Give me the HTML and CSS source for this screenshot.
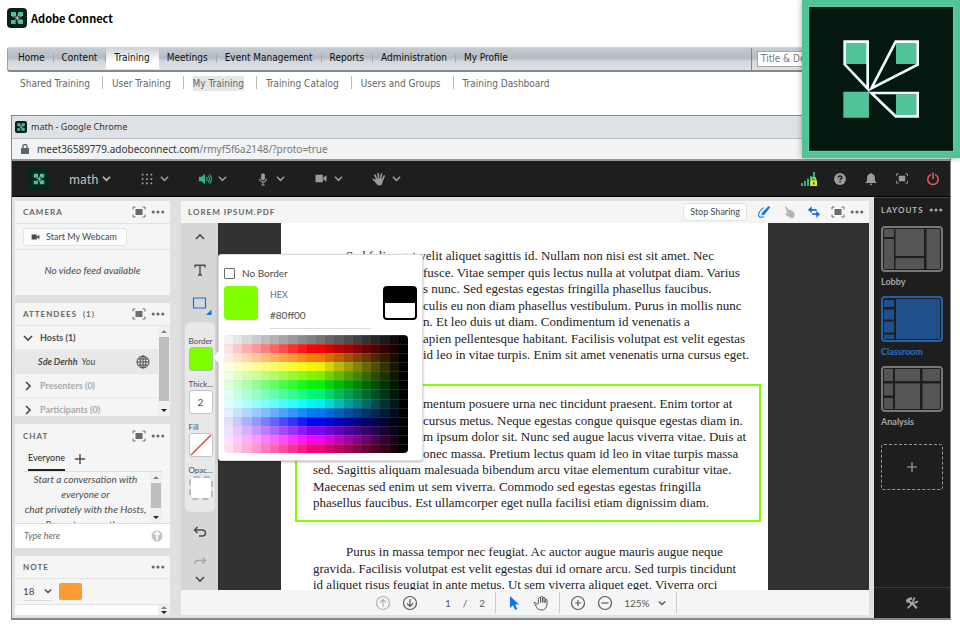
FILE: index.html
```html
<!DOCTYPE html>
<html lang="en">
<head>
<meta charset="utf-8">
<title>Adobe Connect</title>
<link rel="stylesheet" href="styles.css">
</head>
<body>
<svg class="defs" aria-hidden="true">
  <symbol id="mark" viewBox="0 0 24 24">
    <path fill="#3fc493" d="M3 3h7v6H3zM14 3h7v6h-7zM3 15h7v6H3zM14 15h7v6h-7z"/>
    <path fill="none" stroke="#bdebd9" stroke-width="1" d="M9.500 4v4l2.500 4 3-8M4 8.500l8 4 8-4M12 12.500l8 3M12 12.500l2.500 7.500M12 12.500l-3 3"/>
  </symbol>
  <symbol id="down" viewBox="0 0 10 10"><path fill="none" stroke="currentColor" stroke-width="1.7" d="M1 3l4 4 4-4"/></symbol>
  <symbol id="right" viewBox="0 0 10 10"><path fill="none" stroke="currentColor" stroke-width="1.7" d="M3 1l4 4-4 4"/></symbol>
  <symbol id="up" viewBox="0 0 10 10"><path fill="none" stroke="currentColor" stroke-width="1.7" d="M1 7l4-4 4 4"/></symbol>
  <symbol id="dots" viewBox="0 0 14 4"><circle cx="2.2" cy="2" r="1.6"/><circle cx="7" cy="2" r="1.6"/><circle cx="11.8" cy="2" r="1.6"/></symbol>
  <symbol id="full" viewBox="0 0 14 12"><path d="M3.500 3h7v6h-7z"/><path fill="none" stroke="currentColor" stroke-width="1" d="M1 3.500V1h2.500M10.500 1H13v2.500M13 8.500V11h-2.500M3.500 11H1V8.500"/></symbol>
  <symbol id="camera" viewBox="0 0 14 12"><path d="M1 2h8v8H1zM9.500 5L13 2.500v7L9.500 7z"/></symbol>
  <symbol id="hand" viewBox="0 0 16 16"><path fill="none" stroke="currentColor" stroke-width="1.800" stroke-linecap="round" d="M5.500 9L3.500 3.500M7.500 8L7 1.700M9.800 8l1-5.800M12 9l2-4.500M4.500 11L1.500 8.500"/><path d="M4 8h8.800l-1 4.500L10.500 15H6.500L3.500 11z"/></symbol>
</svg>

<header class="brand">
  <span class="badge"><svg><use href="#mark"/></svg></span>
  <strong>Adobe Connect</strong>
</header>

<div class="mainbar">
  <nav class="tabs">
    <a href="#">Home</a><a href="#">Content</a><a href="#" class="on">Training</a><a href="#">Meetings</a><a href="#">Event Management</a><a href="#">Reports</a><a href="#">Administration</a><a href="#">My Profile</a>
  </nav>
  <div class="search"><input type="text" aria-label="Search" value="Title &amp; Description"></div>
</div>
<nav class="subnav">
  <a href="#">Shared Training</a><a href="#">User Training</a><a href="#" class="on"><span>My Training</span></a><a href="#">Training Catalog</a><a href="#">Users and Groups</a><a href="#">Training Dashboard</a>
</nav>

<div class="window">
  <div class="titlebar"><span class="badge small"><svg><use href="#mark"/></svg></span>math - Google Chrome</div>
  <div class="address">
    <svg class="lock" viewBox="0 0 8 10"><path d="M0 4h8v6H0z"/><path fill="none" stroke="#5f6368" stroke-width="1.300" d="M2 4V2.500a2 2 0 0 1 4 0V4"/></svg>
    <span>meet36589779.adobeconnect.com<i>/rmyf5f6a2148/?proto=true</i></span>
  </div>

  <div class="menubar">
    <span class="badge dark"><svg><use href="#mark"/></svg></span>
    <button class="math">math <svg class="chev"><use href="#down"/></svg></button>
    <button aria-label="Pods"><svg viewBox="0 0 16 16"><path d="M2 2h2v2H2zM7 2h2v2H7zM12 2h2v2h-2zM2 7h2v2H2zM7 7h2v2H7zM12 7h2v2h-2zM2 12h2v2H2zM7 12h2v2H7zM12 12h2v2h-2z"/></svg><svg class="chev"><use href="#down"/></svg></button>
    <button aria-label="Speaker"><svg class="mint" viewBox="0 0 16 16"><path d="M1 5.500h3L8 2v12l-4-3.500H1z"/><path fill="none" stroke="currentColor" stroke-width="1.200" d="M9.500 5.500q2 2.500 0 5M11.500 4q3 4 0 8M13.300 2.500q4 5.500 0 11"/></svg><svg class="chev"><use href="#down"/></svg></button>
    <button aria-label="Microphone"><svg viewBox="0 0 16 16"><rect x="5.800" y="1.500" width="4.400" height="8" rx="2.200"/><path fill="none" stroke="currentColor" stroke-width="1.200" d="M4.200 7.500q0 4 3.800 4t3.800-4M8 11.500V15M6 14.800h4"/></svg><svg class="chev"><use href="#down"/></svg></button>
    <button aria-label="Camera"><svg class="cam"><use href="#camera"/></svg><svg class="chev"><use href="#down"/></svg></button>
    <button aria-label="Raise hand"><svg><use href="#hand"/></svg><svg class="chev"><use href="#down"/></svg></button>
    <div class="status">
      <button aria-label="Connection"><svg class="signal" viewBox="0 0 16 16"><path fill="#2fb47e" d="M0 12h2v3H0zM3 10h2v5H3zM6 7.500h2V15H6zM9 5h2v10H9zM12 1h2v14h-2z"/><path fill="#f4ec10" d="M9.500 9.500H16V15H9.500z"/><path fill="none" stroke="#f4ec10" stroke-width="1.200" d="M10.800 9.500V8q0-1.500 2-1.500t2 1.500v1.500"/><path fill="#222" d="M12.200 11h1.200v2.500h-1.200z"/></svg></button>
      <button aria-label="Help"><svg viewBox="0 0 16 16"><circle cx="8" cy="8" r="6.800"/><path fill="none" stroke="#1e1e1e" stroke-width="1.700" d="M5.900 6.400q.1-1.900 2.100-1.900t2.100 1.700q0 1-1.100 1.600-.9.500-.9 1.400M8.100 10.300v1.500"/></svg></button>
      <button aria-label="Notifications"><svg viewBox="0 0 16 16"><path d="M8 1q1 0 1 1Q12.500 3 12.500 7v3l2 2.500h-13l2-2.500V7q0-4 3.500-5 0-1 1-1zM6.500 13.300h3q-.3 1.700-1.500 1.700t-1.500-1.700z"/></svg></button>
      <button aria-label="Full screen"><svg class="cam"><use href="#full"/></svg></button>
      <button aria-label="End"><svg class="red" viewBox="0 0 16 16"><path fill="none" stroke="currentColor" stroke-width="1.700" stroke-linecap="round" d="M8 1.200v6.300M5 3.200a6 6 0 1 0 6 0"/></svg></button>
    </div>
  </div>

  <div class="room">
    <div class="pods">
      <section class="pod camera">
        <header><h2>CAMERA</h2><button aria-label="Full screen"><svg class="full"><use href="#full"/></svg></button><button aria-label="More"><svg class="dots"><use href="#dots"/></svg></button></header>
        <div class="row"><button class="soft"><svg><use href="#camera"/></svg>Start My Webcam</button></div>
        <p><em>No video feed available</em></p>
      </section>

      <section class="pod attendees">
        <header><h2>ATTENDEES &nbsp;(1)</h2><button aria-label="Full screen"><svg class="full"><use href="#full"/></svg></button><button aria-label="More"><svg class="dots"><use href="#dots"/></svg></button></header>
        <div class="scroll">
          <ul>
            <li><svg><use href="#down"/></svg><b>Hosts (1)</b></li>
            <li class="person"><em><b>Sde Derhh</b>&nbsp; You</em><svg class="globe" viewBox="0 0 14 14"><g fill="none" stroke="currentColor" stroke-width="1"><circle cx="7" cy="7" r="6"/><ellipse cx="7" cy="7" rx="2.900" ry="6"/><path d="M7 1v12M1 7h12M1.900 4h10.200M1.900 10h10.200"/></g></svg></li>
            <li class="dim"><svg><use href="#right"/></svg><b>Presenters (0)</b></li>
            <li class="dim"><svg><use href="#right"/></svg><b>Participants (0)</b></li>
          </ul>
          <div class="bar"><i class="tri"></i><i class="thumb"></i><i class="tri dn"></i></div>
        </div>
      </section>

      <section class="pod chat">
        <header><h2>CHAT</h2><button aria-label="Full screen"><svg class="full"><use href="#full"/></svg></button><button aria-label="More"><svg class="dots"><use href="#dots"/></svg></button></header>
        <div class="who"><button class="on">Everyone</button><button aria-label="Add chat"><svg viewBox="0 0 10 10"><path fill="none" stroke="currentColor" stroke-width="1.400" d="M5 0v10M0 5h10"/></svg></button></div>
        <div class="scroll">
          <p><em>Start a conversation with<br>everyone or<br>chat privately with the Hosts,<br>Presenters, or other</em></p>
          <div class="bar"><i class="tri"></i><i class="thumb"></i><i class="tri dn"></i></div>
        </div>
        <div class="type"><input type="text" aria-label="Message" placeholder="Type here"><button aria-label="Send"><svg viewBox="0 0 12 12"><circle cx="6" cy="6" r="5.500"/><path fill="none" stroke="#fff" stroke-width="1.600" d="M6 10V4M3.300 4.500L6 2.500l2.700 2"/></svg></button></div>
      </section>

      <section class="pod note">
        <header><h2>NOTE</h2><button aria-label="More"><svg class="dots"><use href="#dots"/></svg></button></header>
        <div class="row"><label class="pick"><select aria-label="Font size"><option>18</option></select><svg class="chev"><use href="#down"/></svg></label><button class="orange" aria-label="Text colour"></button></div>
        <div class="scroll"><div class="pad"></div><div class="bar"><i class="tri"></i><i class="tri dn"></i></div></div>
      </section>
    </div>

    <section class="share">
      <header>
        <h2>LOREM IPSUM.PDF</h2>
        <button class="soft">Stop Sharing</button>
        <button class="blue" aria-label="Draw"><svg viewBox="0 0 16 16"><path d="M5 12l1-3.500L13 1.500q1-.5 1.500.3t0 1.500L8.300 11z"/><path fill="none" stroke="currentColor" stroke-width="1.200" d="M7.500 3Q1 8 2 12.500q1 2.500 6 1"/></svg></button>
        <button class="pale" aria-label="Pointer"><svg viewBox="0 0 16 16"><path d="M3.500 2q1-1 2 .2L8 6.500l.3-1q1-.8 1.600.2l.4 1q1-.8 1.700.4l.2.7q1.300-.5 1.800 1 1 3.200-.2 5.200-2 1.800-4.500.7L3.500 10.500q-.3-1.300 1.500-1L6.500 10z"/></svg></button>
        <button class="blue" aria-label="Sync"><svg viewBox="0 0 16 16"><path d="M1 5.500L5.500 1.500v3H11v2H5.500v3zM15 10.500l-4.500-4v3H6v2h4.500v3z"/></svg></button>
        <button aria-label="Full screen"><svg class="full"><use href="#full"/></svg></button>
        <button aria-label="More"><svg class="dots"><use href="#dots"/></svg></button>
      </header>

      <div class="stage">
        <div class="tools">
          <button class="tall" aria-label="Scroll up"><svg class="s10"><use href="#up"/></svg></button>
          <button class="tall" aria-label="Text"><svg class="s12" viewBox="0 0 12 12"><path fill="none" stroke="currentColor" stroke-width="1.400" d="M1 3.500V1.200h10v2.300M6 1v10M4 11h4"/></svg></button>
          <button class="tall blue" aria-label="Shape"><svg class="shape" viewBox="0 0 20 18"><path fill="none" stroke="currentColor" stroke-width="1.200" d="M1.500 1h12v10h-12z"/><path d="M19.500 12.500V18H14z"/></svg></button>
          <div class="props">
            <span>Border</span><button class="box green" aria-label="Border colour"></button>
            <span>Thick...</span><input class="box" aria-label="Thickness" value="2">
            <span>Fill</span><button class="box" aria-label="Fill"><svg viewBox="0 0 22 22"><path stroke="#e23a3a" stroke-width="1.300" d="M1 21L21 1"/></svg></button>
            <span>Opac...</span><button class="box opac" aria-label="Opacity"></button>
          </div>
          <button class="undo" aria-label="Undo"><svg viewBox="0 0 14 12"><path fill="none" stroke="currentColor" stroke-width="1.500" d="M4.500 1L1.500 4l3 3M2 4h7q3.500 0 3.500 3T9 10H6"/></svg></button>
          <button class="redo" aria-label="Redo"><svg viewBox="0 0 14 12"><path fill="none" stroke="currentColor" stroke-width="1.300" d="M9.500 1.500l3 3-3 3M12 4.500H5q-3.500 0-3.500 4"/></svg></button>
          <button class="last" aria-label="Scroll down"><svg class="s10"><use href="#down"/></svg></button>
        </div>

        <article class="paper">
          <p><span class="in">Sed felis eget velit aliquet sagittis id. Nullam non nisi est sit amet. Nec</span><span><i>elementum nisi quis</i>fusce. Vitae semper quis lectus nulla at volutpat diam. Varius</span><span><i>vel pharetra turpi</i>s nunc. Sed egestas egestas fringilla phasellus faucibus.</span><span><i>Risus viverra ia</i>culis eu non diam phasellus vestibulum. Purus in mollis nunc</span><span><i>sed id semper risus i</i>n. Et leo duis ut diam. Condimentum id venenatis a</span><span><i>condimentum s</i>apien pellentesque habitant. Facilisis volutpat est velit egestas</span><span><i>dui id ornare arcu</i>id leo in vitae turpis. Enim sit amet venenatis urna cursus eget.</span></p>
          <p class="marked"><span class="in"><i>Condi</i>mentum posuere urna nec tincidunt praesent. Enim tortor at</span><span><i>auctor urna nunc</i>cursus metus. Neque egestas congue quisque egestas diam in.</span><span><i>Arcu cursus Lore</i>m ipsum dolor sit. Nunc sed augue lacus viverra vitae. Duis at</span><span><i>tellus at urna D</i>onec massa. Pretium lectus quam id leo in vitae turpis massa</span><span>sed. Sagittis aliquam malesuada bibendum arcu vitae elementum curabitur vitae.</span><span>Maecenas sed enim ut sem viverra. Commodo sed egestas egestas fringilla</span><span>phasellus faucibus. Est ullamcorper eget nulla facilisi etiam dignissim diam.</span></p>
          <p class="short"><span class="in">Purus in massa tempor nec feugiat. Ac auctor augue mauris augue neque</span><span>gravida. Facilisis volutpat est velit egestas dui id ornare arcu. Sed turpis tincidunt</span><span>id aliquet risus feugiat in ante metus. Ut sem viverra aliquet eget. Viverra orci</span></p>
        </article>

        <div class="popover">
          <label class="none"><input type="checkbox">No Border</label>
          <div class="hex">
            <i class="current"></i>
            <label><span>HEX</span><input type="text" value="#80ff00"></label>
            <i class="duo"></i>
          </div>
          <div class="palette" id="palette"></div>
        </div>
      </div>

      <footer>
        <button class="pale" aria-label="Previous page"><svg viewBox="0 0 16 16"><g fill="none" stroke="currentColor" stroke-width="1.200"><circle cx="8" cy="8" r="6.500"/><path d="M8 12V4.500M5 7.500l3-3 3 3"/></g></svg></button>
        <button aria-label="Next page"><svg viewBox="0 0 16 16"><g fill="none" stroke="currentColor" stroke-width="1.200"><circle cx="8" cy="8" r="6.500"/><path d="M8 4v7.500M5 8.500l3 3 3-3"/></g></svg></button>
        <span class="pages"><span>1</span><span>/</span><span>2</span></span>
        <i class="sep"></i>
        <button class="blue" aria-label="Select"><svg viewBox="0 0 16 16"><path d="M4 1l9 8.500H9.200l2 4.500-2 1-2.200-4.700L4 13z"/></svg></button>
        <button aria-label="Pan"><svg viewBox="0 0 16 16"><path fill="none" stroke="currentColor" stroke-width="1" d="M4.500 10L2.500 7.500q-1-.8-1.300.3L4 13q1 2 4.500 2 5 0 5.500-6V5q-1-1.500-2 0v3V3q-1-1.500-2.200 0v4.500V2q-1-1.300-2.200 0v5.500V3Q6.500 2 5.300 3.500V9"/></svg></button>
        <i class="sep"></i>
        <button aria-label="Zoom in"><svg viewBox="0 0 16 16"><g fill="none" stroke="currentColor" stroke-width="1.200"><circle cx="8" cy="8" r="6.500"/><path d="M8 5v6M5 8h6"/></g></svg></button>
        <button aria-label="Zoom out"><svg viewBox="0 0 16 16"><g fill="none" stroke="currentColor" stroke-width="1.200"><circle cx="8" cy="8" r="6.500"/><path d="M4.500 8h7"/></g></svg></button>
        <label class="pick zoom"><select aria-label="Zoom level"><option>125%</option></select><svg class="chev"><use href="#down"/></svg></label>
        <i class="sep"></i>
      </footer>
    </section>

    <aside class="layouts">
      <header><h2>LAYOUTS</h2><button aria-label="More"><svg class="dots"><use href="#dots"/></svg></button></header>
      <button class="card"><svg viewBox="0 0 62 46"><rect class="frame" x="1" y="1" width="60" height="44" rx="3"/><path d="M3 3h10v8H3zM3 13h10v30H3zM14.500 3H43v27H14.500zM14.500 32H43v11H14.500zM45.500 3H59v40H45.500z"/></svg>Lobby</button>
      <button class="card active"><svg viewBox="0 0 62 46"><rect class="frame" x="1" y="1" width="60" height="44" rx="3"/><path d="M3 4h10v7H3zM3 13.500h10v10H3zM3 25.500h10v11H3zM3 38.500h10V43H3zM15 3h44v40H15z"/></svg>Classroom</button>
      <button class="card"><svg viewBox="0 0 62 46"><rect class="frame" x="1" y="1" width="60" height="44" rx="3"/><path d="M3 3h9v12H3zM3 17.500h9v12H3zM3 32h9v11H3zM14 3h25v12H14zM14 17.500h25V43H14zM41.500 3H59v12H41.500zM41.500 17.500H59V43H41.500z"/></svg>Analysis</button>
      <button class="add" aria-label="Add layout"><svg viewBox="0 0 10 10"><path fill="none" stroke="currentColor" stroke-width="1.200" d="M5 0v10M0 5h10"/></svg></button>
      <button class="wrench" aria-label="Host tools"><svg viewBox="0 0 16 16"><path fill="none" stroke="currentColor" stroke-width="2.600" d="M7.500 7.500L13.500 14M2.500 5.500Q4 2.500 8 3"/><path d="M1 5.500L4.500 2h4L5.500 5l3 3L6.500 10 4 7 2.500 8z"/><path fill="none" stroke="currentColor" stroke-width="2" d="M3 14l7-7M9.500 6.500q-.5-3 2-4.500M10.500 7.500q3 .5 4-2"/></svg></button>
    </aside>
  </div>
</div>

<div class="emblem">
  <svg viewBox="486 0 474 474">
    <rect x="486" width="474" height="474" fill="#51c399"/>
    <rect x="506" y="19" width="435" height="435" fill="#04180f" stroke="#5fe3b1" stroke-width="3"/>
    <path fill="#51c399" d="M617 129h65v63h-65zM768 129h62v63h-62zM610 275h77v78h-77zM768 283h62v63h-62z"/>
    <path fill="none" stroke="#f1fbff" stroke-width="8" d="M614 125h69v141L614 193zM767 125h66v69L694 265zM694 279h139v70h-66z"/>
  </svg>
</div>
<script src="palette.js"></script>
</body>
</html>
```

FILE: palette.js
```js
// One grey row, then twelve hues; each row runs from a light tint to black.
const palette = document.getElementById("palette");
for (let row = 0; row < 13; row++) {
  for (let col = 0; col < 20; col++) {
    const swatch = document.createElement("button");
    const light = col < 10 ? 94 - col * 5 : Math.max(0, 48 - (col - 10) * 5.4);
    const hue = (row - 1) * 30;
    const tone = row === 0 ? `hsl(0 0% ${95 - col * 5}%)` : `hsl(${hue} 96% ${light}%)`;
    swatch.style.background = tone;
    swatch.setAttribute("aria-label", tone);
    palette.append(swatch);
  }
}
```

FILE: styles.css
```css
* { box-sizing: border-box; }
html, body { height: 100%; }
body {
  margin: 0;
  display: flex;
  flex-direction: column;
  background: #fff;
  color: #4b4b4b;
  font: 9px/12px Lato, sans-serif;
  overflow: hidden;
  position: relative;
}
button, input, select { font: inherit; color: inherit; border: 0; margin: 0; padding: 0; background: none; }
button { display: flex; align-items: center; justify-content: center; flex: none; }
a { color: inherit; text-decoration: none; }
h2, p, ul { margin: 0; padding: 0; }
h2 { font-size: 8px; line-height: 12px; font-weight: 700; letter-spacing: 1px; flex: 1; white-space: nowrap; color: #666; }
svg { fill: currentColor; display: block; flex: none; }
.defs { display: none; }

.badge { width: 20px; height: 20px; border-radius: 4px; background: #0b2019; display: flex; align-items: center; justify-content: center; flex: none; }
.badge svg { width: 16px; height: 16px; }
.badge.small { width: 12px; height: 12px; border-radius: 2px; }
.badge.small svg { width: 10px; height: 10px; }
.badge.dark { width: 22px; height: 22px; background: #06271b; margin-right: 19px; }

.brand { display: flex; align-items: center; gap: 4px; padding: 8px 7px 0; height: 28px; color: #000; font: 11px/16px "Noto Sans CJK JP", sans-serif; }

.mainbar {
  margin: 19px 0 0 7px;
  height: 25px;
  flex: none;
  display: flex;
  border-top: 1px solid #cfd6da;
  border-left: 1px solid #9aa2a7;
  border-bottom: 2px solid #84898c;
  border-radius: 3px 0 0 3px;
  background: linear-gradient(#c5cdd3, #b2bbc2 45%, #d3d8dd 60%, #dfe3e7);
  color: #111;
  font: 10px/20px "DejaVu Sans Condensed", "DejaVu Sans", sans-serif;
}
.tabs { display: flex; flex: 1; padding-left: 2px; }
.tabs a { padding: 0 9px 0 8px; height: 20px; background: linear-gradient(#9fa6ab, #9fa6ab) right 6px / 1px 8px no-repeat; }
.tabs .on { background: linear-gradient(#cdd3d8, #fff 60%); height: 21px; }
.tabs a:last-child { background: none; }
.search { width: 209px; border-left: 1px solid #84898c; padding: 3px 0 0 5px; }
.search input { width: 150px; height: 16px; background: #fff; border: 1px solid #a5a9ac; color: #777; padding-left: 3px; display: block; }

.subnav { display: flex; flex: none; margin: 4px 0 0 11px; color: #666; font: 10px/15px "DejaVu Sans Condensed", "DejaVu Sans", sans-serif; height: 15px; }
.subnav a { padding: 0 12px 0 9px; border-right: 1px solid #bbb; height: 13px; }
.subnav a:last-child { border: 0; }
.subnav span { display: block; background: #e6e6e6; }

.window { flex: 1; min-height: 0; margin: 24px 9px 20px 11px; border: 1px solid #85888b; border-bottom-width: 2px; display: flex; flex-direction: column; background: #e0e0e0; }
.titlebar { background: #dee1e6; height: 23px; flex: none; display: flex; align-items: center; gap: 4px; padding-left: 3px; color: #333; font: 9px/12px "Noto Sans", sans-serif; border-bottom: 1px solid #b9bcc0; }
.address { background: #f1f3f4; height: 20px; flex: none; display: flex; align-items: center; gap: 8px; padding-left: 9px; color: #33363a; font: 10px/14px "Noto Sans", sans-serif; }
.address i { font-style: normal; color: #73777b; }
.lock { width: 8px; height: 10px; fill: #5f6368; }

.menubar { height: 38px; flex: none; background: #1e1e1e; border-top: 2px solid #999; border-bottom: 1px solid #000; display: flex; align-items: center; gap: 28px; padding: 0 9px 0 16px; color: #9b9b9b; }
.menubar > .badge { margin-right: -9px; }
.menubar svg { width: 16px; height: 14px; }
.menubar svg.cam { width: 16px; height: 11px; }
.menubar svg.signal { height: 16px; }
.menubar button { gap: 5px; }
.menubar svg.chev { width: 9px; height: 9px; }
.menubar .math { font: 12px/16px "Noto Sans CJK JP", sans-serif; color: #c4c4c4; gap: 3px; }
.mint { color: #35b585; }
.red { color: #ec5b62; }
.status { display: flex; gap: 15px; margin-left: auto; }

.room { flex: 1; min-height: 0; display: flex; }
.pods { width: 158px; flex: none; padding: 4px 0 3px 3px; display: flex; flex-direction: column; gap: 8px; }
.pod { background: #f5f5f5; display: flex; flex-direction: column; overflow: hidden; flex: none; }
.pod header { height: 23px; flex: none; display: flex; align-items: center; gap: 5px; padding: 0 5px 0 8px; border-bottom: 1px solid #e2e2e2; }
.full { width: 14px; height: 12px; color: #6b6b6b; }
.dots { width: 14px; height: 4px; color: #6b6b6b; }
.camera { height: 94px; }
.row { height: 26px; flex: none; display: flex; align-items: center; padding: 0 8px; border-bottom: 1px solid #e2e2e2; }
.soft { height: 18px; padding: 0 9px 0 7px; border: 1px solid #e0e5e5; border-radius: 3px; background: #fbfcfc; gap: 6px; }
.soft svg { width: 9px; height: 8px; }
.camera p { flex: 1; display: flex; align-items: center; justify-content: center; font-size: 10px; padding-bottom: 6px; }

.attendees { height: 113px; }
.scroll { flex: 1; min-height: 0; display: flex; overflow: hidden; }
.scroll ul { flex: 1; list-style: none; }
.scroll li { height: 24px; display: flex; align-items: center; gap: 7px; padding-left: 8px; border-bottom: 1px solid #e8e8e8; }
.scroll li svg { width: 10px; height: 10px; }
.scroll li.person { background: #e8e8e8; justify-content: space-between; padding: 0 8px 0 23px; }
.scroll li svg.globe { width: 14px; height: 14px; }
.dim b { color: #a9a9a9; }
.bar { width: 12px; flex: none; background: #f0f0f0; display: flex; flex-direction: column; align-items: center; padding: 4px 1px; gap: 4px; }
.tri { border: 3px solid transparent; border-top: 0; border-bottom: 3px solid #888; flex: none; }
.tri.dn { border-top: 3px solid #222; border-bottom: 0; }
.thumb { background: #bdbdbd; align-self: stretch; flex: 1; }
.attendees .thumb { margin-bottom: 4px; }

.chat { height: 124px; }
.who { height: 25px; flex: none; display: flex; align-items: stretch; gap: 10px; margin: 0 8px; padding-left: 5px; border-bottom: 1px solid #ddd; }
.who .on { border-bottom: 2px solid #222; color: #222; }
.who svg { width: 10px; height: 10px; }
.chat header { border: 0; }
.chat .scroll p { flex: 1; text-align: center; font-size: 10px; line-height: 15px; white-space: nowrap; padding-left: 6px; }
.chat .bar { margin-right: 8px; padding: 4px 1px; }
.chat .thumb { margin-bottom: 4px; }
.type { height: 25px; flex: none; background: #fff; border-top: 1px solid #ddd; display: flex; align-items: center; padding: 0 7px 0 9px; }
.type input { flex: 1; min-width: 0; font-style: italic; }
.type svg { width: 12px; height: 12px; color: #c5c5c5; }
.type input::placeholder { color: #6b6b6b; }

.note { flex: 1; }
.pick { display: flex; align-items: center; border-bottom: 1px solid #ddd; height: 18px; width: 29px; }
.pick select { appearance: none; font-size: 10px; flex: 1; min-width: 0; }
.pick .chev { width: 8px; height: 8px; }
.orange { width: 23px; height: 17px; border-radius: 2px; background: #ff9933; margin-left: 7px; }
.pad { flex: 1; background: #fff; }
.note .bar { gap: 2px; padding: 1px; }

.share { flex: 1; min-width: 0; margin: 4px 5px 3px 11px; display: flex; flex-direction: column; background: #f5f5f5; }
.share header { height: 22px; flex: none; display: flex; align-items: center; gap: 9px; padding: 0 5px 0 7px; }
.share header svg { width: 16px; height: 14px; }
.share header svg.full { width: 14px; height: 12px; }
.share header svg.dots { width: 14px; height: 4px; }
.share header .soft { padding: 0 6px; }
.share header button:last-child { margin-left: -4px; }
.blue { color: #1473e6; }
.pale { color: #b3b3b3; }
.stage { flex: 1; min-height: 0; display: flex; position: relative; background: #323232; }
.tools { width: 37px; flex: none; background: #d6d6d6; display: flex; flex-direction: column; align-items: center; overflow: hidden; }
.tools button { width: 30px; }
.tall { height: 33px; flex: none; padding-top: 0; }
.tall:first-child { height: 28px; }
.tall:nth-child(2) { height: 38px; }
.s10 { width: 10px; height: 10px; }
.s12 { width: 12px; height: 12px; }
.shape { width: 20px; height: 18px; margin: 0 0 0 5px; }
.props { background: #e8e8e8; border-radius: 6px; width: 30px; height: 190px; flex: none; padding: 13px 2px 0 4px; font-size: 8px; line-height: 12px; display: grid; grid-template-rows: repeat(4, 12px 31px); align-content: start; white-space: nowrap; }
.tools .box { width: 24px; height: 24px; border: 1px solid #c3c3c3; border-radius: 3px; background: #fff; text-align: center; }
.tools input.box { font-size: 10px; }
.tools .green { background: #80ff00; border-color: #9c9; }
.box svg { width: 22px; height: 22px; }
.tools .opac { border: 2px dashed #bbb; background: #fff padding-box; border-radius: 5px; }
.undo, .redo, .last { color: #4b4b4b; }
.undo { height: 40px; }
.redo { height: 20px; color: #a8a8a8; }
.last { height: 14px; margin-top: 0; }
.undo svg, .redo svg { width: 14px; height: 12px; }

.paper { flex: 1; min-width: 0; margin: 0 101px 0 63px; background: #fff; overflow: hidden; padding-top: 25px; color: #222; font: 13px/16px "Liberation Serif", serif; }
.paper p { display: flex; flex-direction: column; justify-content: space-between; height: 115px; margin-left: 32px; white-space: nowrap; }
.paper p > span { display: flex; }
.paper .in { padding-left: 33px; }
.paper i { width: 110px; flex: none; text-align: right; font-style: normal; }
.paper .in i { width: 77px; }
.paper p.marked { height: 138px; margin: 21px 7px 22px 14px; border: 2px solid #80ff00; padding: 10px 0 9px 16px; }
.paper p.short { height: 49px; }

.popover { position: absolute; left: 37px; top: 31px; width: 205px; background: #fff; border-radius: 3px; border: 1px solid #ddd; box-shadow: 0 1px 3px rgba(0, 0, 0, .3); padding: 11px 5px 7px; }
.popover::before { content: ""; position: absolute; left: -6px; top: 96px; border: 6px solid transparent; border-left: 0; border-right-color: #fff; }
.none { display: flex; align-items: center; gap: 7px; font-size: 10px; height: 14px; }
.none input { appearance: none; width: 11px; height: 11px; border: 1px solid #6b6b6b; border-radius: 1px; }
.hex { display: flex; gap: 12px; margin: 6px 0; }
.current { width: 34px; height: 34px; border-radius: 4px; background: #80ff00; }
.hex label { width: 101px; height: 43px; border-bottom: 1px solid #ddd; display: flex; flex-direction: column; gap: 6px; padding-top: 3px; }
.hex label span { color: #6b6b6b; }
.hex label input { width: 100%; font-size: 10px; height: 16px; }
.duo { width: 34px; height: 34px; border: 2px solid #000; border-radius: 4px; background: linear-gradient(#000 50%, #fff 50%); }
.palette { display: grid; grid-template-columns: repeat(20, 1fr); grid-auto-rows: 1fr; width: 184px; height: 118px; border-radius: 4px; overflow: hidden; }
.palette button { box-shadow: inset 0 1px rgba(200, 200, 200, .15); }

.share footer { height: 25px; flex: none; display: flex; align-items: center; padding-left: 194px; gap: 11px; color: #5a5a5a; }
footer svg { width: 16px; height: 16px; }
.pages { display: flex; gap: 12px; padding: 0 0 0 16px; font-size: 10px; }
.sep { width: 1px; height: 21px; background: #ccc; margin: 0 -1px; }
.pick.zoom { border: 0; width: 42px; }

.layouts { width: 76px; flex: none; background: #1e1e1e; color: #a5a5a5; display: flex; flex-direction: column; padding: 0 7px; border-top: 1px solid #444; }
.layouts header { display: flex; align-items: center; height: 24px; margin-bottom: 4px; }
.layouts .dots { color: #a5a5a5; }
.layouts h2 { color: #b5b5b5; }
.card { flex-direction: column; gap: 4px; align-items: flex-start; font-weight: 700; line-height: 12px; margin-bottom: 8px; }
.card svg { width: 62px; height: 46px; fill: #555; }
.frame { fill: none; stroke: #777; stroke-width: 2; }
.active { color: #2d70c8; }
.active svg { fill: #20508c; }
.active .frame { stroke: #2860a8; }
.add { border: 1px dashed #999; border-radius: 3px; height: 46px; margin-top: 8px; }
.add svg { width: 10px; height: 10px; }
.wrench { margin: auto -7px 0; height: 31px; border-top: 1px solid #3a3a3a; }
.wrench svg { width: 14px; height: 14px; }

.emblem { position: absolute; right: 0; top: 0; width: 158px; box-shadow: 0 0 6px rgba(0, 0, 0, .35); }
```
